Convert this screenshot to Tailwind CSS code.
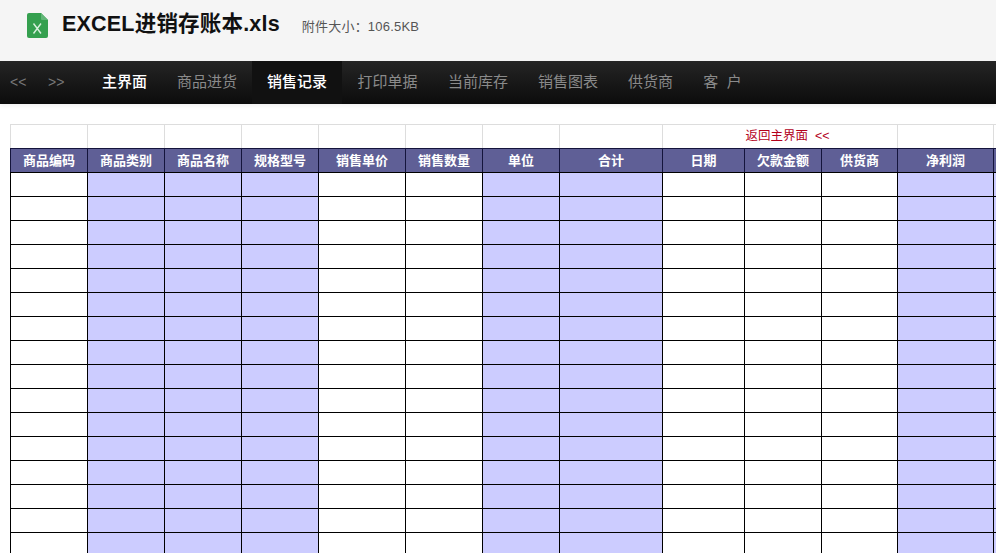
<!DOCTYPE html>
<html lang="zh-CN">
<head>
  <meta charset="UTF-8" />
  <title>EXCEL进销存账本.xls</title>
  <script src="https://cdn.jsdelivr.net/npm/@tailwindcss/browser@4"></script>
</head>
<body class="bg-white w-[996px] h-[553px] overflow-hidden font-['Liberation_Sans','Noto_Sans_CJK_SC',sans-serif]">
  <!-- file title -->
  <header class="h-[61px] bg-[#f5f5f5] flex items-center pl-[27px] pb-[10px]">
    <svg class="w-[21px] h-[25px] mb-[1px]" viewBox="0 0 21 25">
      <path d="M2 0H14L21 7V23a2 2 0 0 1-2 2H2a2 2 0 0 1-2-2V2a2 2 0 0 1 2-2Z" fill="#35a04f"/>
      <path d="M14 0L21 7H15a1 1 0 0 1-1-1Z" fill="#62b678"/>
      <path d="M6.5 10.5L14 20.5M14 10.5L6.5 20.5" stroke="#d8f0de" stroke-width="1.4" fill="none"/>
    </svg>
    <h1 class="ml-[14px] mb-[1px] text-[21.5px] tracking-[0.2px] font-bold text-[#111] leading-none">EXCEL进销存账本.xls</h1>
    <span class="ml-[22px] mt-[3px] text-[13px] tracking-[0.2px] text-[#555]">附件大小：106.5KB</span>
  </header>

  <!-- nav -->
  <nav class="h-[43px] bg-gradient-to-b from-[#252525] to-[#0c0c0c] flex items-center text-[15px] text-[#8a8a8a] shadow-[0_2px_4px_rgba(0,0,0,0.06)]">
    <span class="w-[48px] pl-[10px] text-[14px] text-[#777]">&lt;&lt;</span>
    <span class="w-[39px] text-[14px] text-[#777]">&gt;&gt;</span>
    <a class="w-[75px] h-full flex items-center justify-center text-white font-medium">主界面</a>
    <a class="w-[90px] h-full flex items-center justify-center">商品进货</a>
    <a class="w-[90px] h-full flex items-center justify-center bg-[#111] text-white font-medium">销售记录</a>
    <a class="w-[91px] h-full flex items-center justify-center">打印单据</a>
    <a class="w-[90px] h-full flex items-center justify-center">当前库存</a>
    <a class="w-[90px] h-full flex items-center justify-center">销售图表</a>
    <a class="w-[75px] h-full flex items-center justify-center">供货商</a>
    <a class="w-[69px] h-full flex items-center justify-center">客&nbsp;&nbsp;户</a>
  </nav>

  <!-- sheet -->
  <main class="pl-[10px] pt-[20px] overflow-hidden">
    <table class="table-fixed border-separate border-spacing-0 w-[1020px]">
      <colgroup>
        <col class="w-[77px]"><col class="w-[77px]"><col class="w-[77px]"><col class="w-[77px]">
        <col class="w-[87px]"><col class="w-[77px]"><col class="w-[77px]"><col class="w-[103px]">
        <col class="w-[82px]"><col class="w-[77px]"><col class="w-[76px]"><col class="w-[96px]"><col>
      </colgroup>
      <tbody id="sheet">
        <tr class="h-[24px]">
          <td class="border-l border-t border-[#ddd]"></td>
          <td class="border-l border-t border-[#ddd]"></td>
          <td class="border-l border-t border-[#ddd]"></td>
          <td class="border-l border-t border-[#ddd]"></td>
          <td class="border-l border-t border-[#ddd]"></td>
          <td class="border-l border-t border-[#ddd]"></td>
          <td class="border-l border-t border-[#ddd]"></td>
          <td class="border-l border-t border-[#ddd]"></td>
          <td colspan="3" class="border-l border-t border-[#ddd] text-center text-[12.5px] text-[#b3001b] pl-[15px]">返回主界面 &nbsp;&lt;&lt;</td>
          <td class="border-l border-t border-[#ddd]"></td>
          <td class="border-l border-t border-[#ddd]"></td>
        </tr>
        <tr class="h-[24px] bg-[#5f5f96] text-white text-[13px] font-bold text-center">
          <td class="border-l border-t border-[#14143c]">商品编码</td>
          <td class="border-l border-t border-[#14143c]">商品类别</td>
          <td class="border-l border-t border-[#14143c]">商品名称</td>
          <td class="border-l border-t border-[#14143c]">规格型号</td>
          <td class="border-l border-t border-[#14143c]">销售单价</td>
          <td class="border-l border-t border-[#14143c]">销售数量</td>
          <td class="border-l border-t border-[#14143c]">单位</td>
          <td class="border-l border-t border-[#14143c]">合计</td>
          <td class="border-l border-t border-[#14143c]">日期</td>
          <td class="border-l border-t border-[#14143c]">欠款金额</td>
          <td class="border-l border-t border-[#14143c]">供货商</td>
          <td class="border-l border-t border-[#14143c]">净利润</td>
          <td class="border-l border-t border-[#14143c]"></td>
        </tr>
      </tbody>
    </table>
  </main>

  <script>
    // 16 empty rows, shaded columns follow the sheet
    const shaded = [false, true, true, true, false, false, true, true, false, false, false, true, true];
    const sheet = document.getElementById('sheet');
    for (let r = 0; r < 16; r++) {
      const tr = document.createElement('tr');
      tr.className = 'h-[24px]';
      shaded.forEach(s => {
        const td = document.createElement('td');
        td.className = s ? 'border-l border-t border-black bg-[#ccccff]' : 'border-l border-t border-black bg-white';
        tr.appendChild(td);
      });
      sheet.appendChild(tr);
    }
  </script>
</body>
</html>
